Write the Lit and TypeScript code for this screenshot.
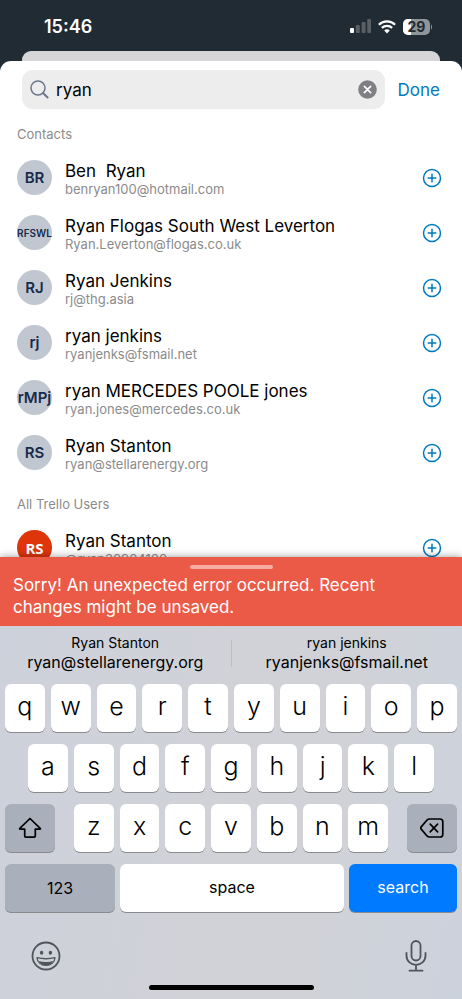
import { LitElement, html, css } from "lit";
import { customElement, property, state } from "lit/decorators.js";

interface Person {
  initials: string;
  name: string;
  detail: string;
  size?: "small";
  member?: boolean;
}

const CONTACTS: Person[] = [
  { initials: "BR", name: "Ben  Ryan", detail: "benryan100@hotmail.com" },
  { initials: "RFSWL", name: "Ryan Flogas South West Leverton", detail: "Ryan.Leverton@flogas.co.uk", size: "small" },
  { initials: "RJ", name: "Ryan Jenkins", detail: "rj@thg.asia" },
  { initials: "rj", name: "ryan jenkins", detail: "ryanjenks@fsmail.net" },
  { initials: "rMPj", name: "ryan MERCEDES POOLE jones", detail: "ryan.jones@mercedes.co.uk" },
  { initials: "RS", name: "Ryan Stanton", detail: "ryan@stellarenergy.org" },
];

const USERS: Person[] = [
  { initials: "RS", name: "Ryan Stanton", detail: "@ryan30904100", member: true },
];

const base = css`
  *, *::before, *::after { box-sizing: border-box; }
  button {
    font: inherit;
    color: inherit;
    background: none;
    border: 0;
    padding: 0;
    margin: 0;
    cursor: pointer;
  }
  svg { display: block; }
`;

@customElement("status-bar")
class StatusBar extends LitElement {
  static styles = [base, css`
    :host {
      display: flex;
      align-items: center;
      justify-content: space-between;
      height: 51px;
      padding: 2px 30px 0 44px;
      color: #fff;
    }
    .time { font-size: 18px; line-height: 22px; font-weight: 600; }
    .icons { display: flex; align-items: center; gap: 7px; }
    .level { font-size: 14px; font-weight: 700; }
  `];

  render() {
    return html`
      <span class="time">15:46</span>
      <span class="icons">
        <svg width="21" height="15" viewBox="0 0 21 15" fill="#fff">
          <rect x="0" y="9" width="4" height="5" rx="1" />
          <g opacity=".25">
            <rect x="5.8" y="6" width="4" height="8" rx="1" />
            <rect x="11.6" y="3" width="4" height="11" rx="1" />
            <rect x="17.2" y="0" width="3.8" height="14" rx="1" />
          </g>
        </svg>
        <svg width="18" height="14" viewBox="0 0 18 14" fill="none" stroke="#fff" stroke-width="2.3">
          <path d="M.9 4.7a11.6 11.6 0 0 1 16.2 0" />
          <path d="M3.9 7.9a7.3 7.3 0 0 1 10.2 0" />
          <path d="M9 13.4 6.2 10.6a4 4 0 0 1 5.6 0Z" fill="#fff" stroke="none" />
        </svg>
        <svg width="29" height="16" viewBox="0 0 29 16">
          <defs><clipPath id="cell"><rect width="27" height="16" rx="5" /></clipPath></defs>
          <g clip-path="url(#cell)">
            <rect width="27" height="16" fill="#909598" />
            <rect width="8" height="16" fill="#fff" />
          </g>
          <path d="M28 5.5c1.3.6 1.3 4.4 0 5Z" fill="#909598" />
          <text class="level" x="13.5" y="13" text-anchor="middle" fill="#212b33">29</text>
        </svg>
      </span>
    `;
  }
}

@customElement("person-row")
class PersonRow extends LitElement {
  @property({ attribute: false }) person!: Person;

  static styles = [base, css`
    :host {
      display: grid;
      grid-template-columns: 35px 1fr 20px;
      align-items: center;
      column-gap: 13px;
      height: 55px;
      padding: 0 20px 0 17px;
    }
    .avatar {
      display: flex;
      align-items: center;
      justify-content: center;
      width: 35px;
      height: 35px;
      border-radius: 50%;
      background: #c1c7d0;
      color: #172b4d;
      font-size: 15px;
      font-weight: 600;
    }
    .small { font-size: 10px; }
    .member {
      background: #de350b;
      color: #fff;
      font-family: "Open Sans", sans-serif;
      font-weight: 700;
    }
    .name {
      font-size: 17px;
      line-height: 22px;
      color: #000;
      white-space: pre;
    }
    .detail {
      font-size: 13px;
      line-height: 14px;
      color: #8b8b8c;
    }
  `];

  render() {
    const p = this.person;
    return html`
      <span class="avatar ${p.size ?? ""} ${p.member ? "member" : ""}">${p.initials}</span>
      <div>
        <div class="name">${p.name}</div>
        <div class="detail">${p.detail}</div>
      </div>
      <button aria-label="Add ${p.name}">
        <svg width="20" height="20" viewBox="0 0 20 20" fill="none" stroke="#0079bf" stroke-width="1.5" stroke-linecap="round">
          <circle cx="10" cy="10" r="8.5" />
          <path d="M10 6.2v7.6M6.2 10h7.6" />
        </svg>
      </button>
    `;
  }
}

@customElement("error-toast")
class ErrorToast extends LitElement {
  static styles = [base, css`
    :host {
      display: block;
      position: relative;
      padding: 8px 13px 8px;
      background: #eb5a46;
      box-shadow: 0 0 8px rgba(0, 0, 0, 0.4);
      color: #fff;
      font-size: 17px;
      line-height: 22px;
    }
    .handle {
      width: 83px;
      height: 4px;
      margin: 0 auto 5px;
      border-radius: 2px;
      background: #f5aca2;
    }
    p { margin: 0; padding-right: 24px; }
  `];

  render() {
    return html`
      <div class="handle"></div>
      <p role="alert">Sorry! An unexpected error occurred. Recent changes might be unsaved.</p>
    `;
  }
}

@customElement("touch-keyboard")
class TouchKeyboard extends LitElement {
  static styles = [base, css`
    :host {
      display: block;
      position: relative;
      background: linear-gradient(100deg, #cdd1db 0%, #d1d2d8 45%, #d1d2d7 65%, #ccd2dd 100%);
      color: #000;
      padding-bottom: 9px;
    }
    .suggestions {
      display: grid;
      grid-template-columns: 1fr 1px 1fr;
      align-items: center;
      height: 58px;
      padding-bottom: 4px;
    }
    .suggestion { display: flex; flex-direction: column; align-items: center; }
    .who { font-size: 14px; line-height: 18px; }
    .mail { font-size: 16px; line-height: 20px; }
    .rule { height: 27px; background: #bcbec4; }
    .keys { display: flex; flex-direction: column; gap: 12px; padding: 0 5px; }
    .row { display: flex; gap: 6px; }
    .inset { padding: 0 23px; }
    .split { display: grid; grid-template-columns: 50fr 314fr 50fr; gap: 19px; }
    .bottom { display: grid; grid-template-columns: 110fr 224fr 108fr; gap: 5px; }
    .key {
      display: flex;
      align-items: center;
      justify-content: center;
      flex: 1;
      height: 48px;
      border-radius: 6px;
      background: #fff;
      box-shadow: 0 1px 0 #898a8d;
      font-size: 25px;
      line-height: 32px;
      font-weight: 300;
      padding-bottom: 4px;
    }
    .word { font-size: 16px; font-weight: 400; padding-bottom: 2px; }
    .dim { background: #a9afbb; padding-bottom: 0; }
    .go { background: #007aff; color: #fff; }
    .tools {
      display: flex;
      align-items: center;
      justify-content: space-between;
      height: 58px;
      margin-top: 15px;
      padding: 0 35px 0 31px;
    }
    .home {
      width: 165px;
      height: 5px;
      margin: 0 auto;
      border-radius: 3px;
      background: #000;
    }
  `];

  private letters(chars: string) {
    return [...chars].map((c) => html`<button class="key">${c}</button>`);
  }

  render() {
    return html`
      <div class="suggestions">
        <button class="suggestion">
          <span class="who">Ryan Stanton</span>
          <span class="mail">ryan@stellarenergy.org</span>
        </button>
        <span class="rule"></span>
        <button class="suggestion">
          <span class="who">ryan jenkins</span>
          <span class="mail">ryanjenks@fsmail.net</span>
        </button>
      </div>
      <div class="keys">
        <div class="row">${this.letters("qwertyuiop")}</div>
        <div class="row inset">${this.letters("asdfghjkl")}</div>
        <div class="split">
          <button class="key dim" aria-label="Shift">
            <svg width="24" height="22" viewBox="0 0 24 22" fill="none" stroke="#000" stroke-width="1.7" stroke-linejoin="round">
              <path d="M12 1.5 22.2 11.3c.4.4.2.9-.4.9H17.3v6.9c0 .7-.4 1.1-1.1 1.1H7.8c-.7 0-1.1-.4-1.1-1.1v-6.9H2.2c-.6 0-.8-.5-.4-.9Z" />
            </svg>
          </button>
          <div class="row">${this.letters("zxcvbnm")}</div>
          <button class="key dim" aria-label="Delete">
            <svg width="24" height="20" viewBox="0 0 24 20" fill="none" stroke="#000" stroke-width="1.7" stroke-linecap="round" stroke-linejoin="round">
              <path d="M9.2 1H20a2.8 2.8 0 0 1 2.8 2.8v12.4A2.8 2.8 0 0 1 20 19H9.2c-.8 0-1.4-.3-1.9-.8L1.4 11.4c-.8-.9-.8-1.9 0-2.8L7.3 1.8C7.8 1.3 8.4 1 9.2 1Z" />
              <path d="m10.2 6.2 7.4 7.6M17.6 6.2l-7.4 7.6" />
            </svg>
          </button>
        </div>
        <div class="bottom">
          <button class="key word dim">123</button>
          <button class="key word">space</button>
          <button class="key word go">search</button>
        </div>
      </div>
      <div class="tools">
        <button aria-label="Emoji">
          <svg width="30" height="30" viewBox="0 0 30 30" fill="none" stroke="#50555c" stroke-width="1.8">
            <circle cx="15" cy="15" r="13.5" />
            <ellipse cx="10.6" cy="11.7" rx="1.7" ry="2" fill="#50555c" stroke="none" />
            <ellipse cx="19.4" cy="11.7" rx="1.7" ry="2" fill="#50555c" stroke="none" />
            <path d="M6 16.6c5.6 1.4 12.4 1.4 18 0-.4 4.7-4 7.8-9 7.8s-8.6-3.1-9-7.8Z" stroke-width="1.3" stroke-linejoin="round" />
            <path d="M7.6 20c4.6 1.2 10.2 1.2 14.8 0-1.4 2.8-4 4.4-7.4 4.4s-6-1.6-7.4-4.4Z" fill="#50555c" stroke="none" />
          </svg>
        </button>
        <button aria-label="Dictate">
          <svg width="22" height="32" viewBox="0 0 22 32" fill="none" stroke="#50555c" stroke-width="1.8" stroke-linecap="round">
            <rect x="6.5" y="1" width="9" height="19.5" rx="4.5" />
            <path d="M1.5 13v2.5c0 5.5 4 9.3 9.5 9.3s9.5-3.8 9.5-9.3V13M11 24.8v5.7M4.5 30.7h13" />
          </svg>
        </button>
      </div>
      <div class="home"></div>
    `;
  }
}

@customElement("app-root")
class AppRoot extends LitElement {
  @state() private query = "ryan";

  static styles = [base, css`
    :host {
      display: flex;
      flex-direction: column;
      height: 100vh;
      overflow: hidden;
      background: #212b33;
      font-family: Inter, "Liberation Sans", sans-serif;
    }
    .behind {
      flex: none;
      height: 10px;
      margin: 0 22px;
      border-radius: 9px 9px 0 0;
      background: #d6d6d8;
    }
    .sheet {
      flex: 1;
      min-height: 0;
      overflow: hidden;
      border-radius: 11px 11px 0 0;
      background: #fff;
    }
    .bar {
      display: flex;
      align-items: center;
      gap: 13px;
      padding: 9px 22px;
    }
    .search {
      flex: 1;
      display: flex;
      align-items: center;
      gap: 7px;
      height: 39px;
      padding: 0 8px;
      border-radius: 11px;
      background: #ededed;
    }
    .field {
      flex: 1;
      min-width: 0;
      border: 0;
      padding: 0;
      outline: 0;
      background: none;
      font: inherit;
      font-size: 17px;
      line-height: 22px;
      color: #000;
    }
    .done { color: #0079bf; font-size: 17px; line-height: 22px; }
    .heading {
      margin: 0;
      padding: 0 17px;
      font-size: 13px;
      line-height: 32px;
      font-weight: 400;
      color: #8b8b8c;
    }
    .group + .group { margin-top: 8px; }
    status-bar, error-toast, touch-keyboard { flex: none; }
  `];

  private onInput(e: Event) {
    this.query = (e.target as HTMLInputElement).value;
  }

  private group(title: string, people: Person[]) {
    return html`
      <section class="group">
        <h2 class="heading">${title}</h2>
        ${people.map((p) => html`<person-row .person=${p}></person-row>`)}
      </section>
    `;
  }

  render() {
    return html`
      <status-bar></status-bar>
      <div class="behind"></div>
      <main class="sheet">
        <div class="bar">
          <div class="search">
            <svg width="19" height="19" viewBox="0 0 19 19" fill="none" stroke="#6b778c" stroke-width="1.5" stroke-linecap="round">
              <circle cx="8" cy="8" r="7" />
              <path d="m13 13 4.6 4.5" stroke-width="2" />
            </svg>
            <input class="field" type="text" aria-label="Search members" .value=${this.query} @input=${this.onInput} />
            <button aria-label="Clear" @click=${() => (this.query = "")}>
              <svg width="19" height="19" viewBox="0 0 19 19">
                <circle cx="9.5" cy="9.5" r="9.3" fill="#808084" />
                <path d="m6.4 6.4 6.2 6.2M12.6 6.4l-6.2 6.2" stroke="#fff" stroke-width="1.7" stroke-linecap="round" />
              </svg>
            </button>
          </div>
          <button class="done">Done</button>
        </div>
        ${this.group("Contacts", CONTACTS)}
        ${this.group("All Trello Users", USERS)}
      </main>
      <error-toast></error-toast>
      <touch-keyboard></touch-keyboard>
    `;
  }
}
